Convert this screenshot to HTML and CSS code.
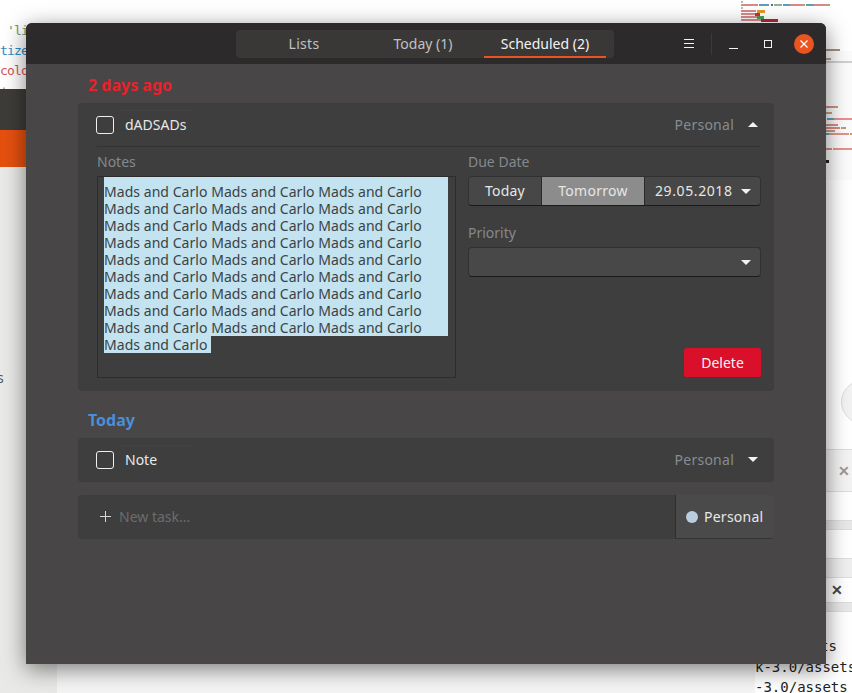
FILE: index.html
```html
<!DOCTYPE html>
<html lang="en">
<head>
    <meta charset="UTF-8">
    <title>Tasks</title>
    <link rel="stylesheet" href="styles.css">
</head>
<body>
    <!-- Other windows behind the app -->
    <div class="desktop">
        <div class="bg-editor">
            <div class="code code-green">'li</div>
            <div class="code code-blue">tize</div>
            <div class="code code-red">colo</div>
            <div class="code code-red">+</div>
        </div>
        <div class="bg-dark"></div>
        <div class="bg-orange"></div>
        <div class="bg-left"></div>
        <div class="bg-s">s</div>

        <svg class="bg-minimap" width="122" height="180" viewBox="730 0 122 180">
            <rect x="826" y="51" width="26" height="129" fill="#fbfbfb"/>
            <rect x="741" y="1" width="2" height="2" fill="#bbb"/>
            <rect x="741" y="4" width="17" height="2" fill="#d88a88"/>
            <rect x="759" y="4" width="10" height="2" fill="#5a9fc0"/>
            <rect x="771" y="4" width="2" height="2" fill="#667"/>
            <rect x="774" y="4" width="8" height="2" fill="#8fb58c"/>
            <rect x="783" y="4" width="7" height="2" fill="#5a9fc0"/>
            <rect x="790" y="4" width="11" height="2" fill="#d88a88"/>
            <rect x="801" y="4" width="4" height="2" fill="#b8a070"/>
            <rect x="806" y="4" width="8" height="2" fill="#5a9fc0"/>
            <rect x="814" y="4" width="11" height="2" fill="#d88a88"/>
            <rect x="825" y="4" width="5" height="2" fill="#b8a070"/>
            <rect x="741" y="7" width="2" height="2" fill="#bbb"/>
            <rect x="741" y="10" width="15" height="2" fill="#d88a88"/>
            <rect x="757" y="10" width="8" height="3" fill="#e09a20"/>
            <rect x="741" y="13" width="14" height="2" fill="#d88a88"/>
            <rect x="755" y="13" width="5" height="3" fill="#c8323a"/>
            <rect x="741" y="16" width="16" height="2" fill="#d88a88"/>
            <rect x="757" y="16" width="7" height="3" fill="#4a9f55"/>
            <rect x="741" y="19" width="20" height="2" fill="#d88a88"/>
            <rect x="761" y="19" width="17" height="3" fill="#b02838"/>
            <rect x="826" y="49" width="14" height="2" fill="#a09080"/>
            <rect x="826" y="58" width="5" height="2" fill="#c89a90"/>
            <rect x="826" y="61" width="26" height="2" fill="#d0d0d0"/>
            <rect x="826" y="106" width="7" height="2" fill="#d88a88"/>
            <rect x="833" y="106" width="5" height="2" fill="#b8a070"/>
            <rect x="826" y="112" width="6" height="2" fill="#c0a080"/>
            <rect x="827" y="118" width="7" height="2" fill="#5a9fc0"/>
            <rect x="834" y="118" width="18" height="2" fill="#e8908c"/>
            <rect x="826" y="124" width="12" height="2" fill="#d88a88"/>
            <rect x="826" y="127" width="14" height="2" fill="#d88a88"/>
            <rect x="841" y="127" width="5" height="2" fill="#b8a070"/>
            <rect x="826" y="130" width="9" height="2" fill="#c0a080"/>
            <rect x="826" y="133" width="3" height="2" fill="#5a9fc0"/>
            <rect x="829" y="133" width="20" height="2" fill="#e8908c"/>
            <rect x="850" y="133" width="2" height="2" fill="#b8a070"/>
            <rect x="826" y="148" width="6" height="2" fill="#d88a88"/>
            <rect x="833" y="148" width="19" height="2" fill="#e8908c"/>
            <rect x="826" y="160" width="3" height="3" fill="#222"/>
        </svg>

        <div class="bg-circle"></div>
        <div class="bg-panel bg-panel-one"><span class="bg-x bg-x-grey">✕</span></div>
        <div class="bg-panel bg-panel-two"></div>
        <div class="bg-panel bg-panel-four"></div>
        <div class="bg-panel bg-panel-three"><span class="bg-x">✕</span></div>
        <div class="bg-panel bg-panel-five"></div>
        <div class="bg-bottom"></div>
        <div class="bg-term">
            <div class="term-first">ts</div>
            <div>k-3.0/assets</div>
            <div>-3.0/assets</div>
        </div>
    </div>

    <div class="window">
        <header class="titlebar">
            <nav class="tabs">
                <div class="tab tab-lists">Lists</div>
                <div class="tab">Today (1)</div>
                <div class="tab tab-active">Scheduled (2)</div>
            </nav>
            <div class="wm">
                <svg class="wm-menu" width="10" height="9" viewBox="0 0 10 9">
                    <path d="M0 .5h10M0 4.5h10M0 8.5h10" stroke="#f2f2f2"/>
                </svg>
                <span class="wm-sep"></span>
                <svg class="wm-min" width="9" height="10" viewBox="0 0 9 10">
                    <path d="M0 9.5h9" stroke="#f2f2f2"/>
                </svg>
                <svg class="wm-max" width="8" height="8" viewBox="0 0 8 8">
                    <rect x=".5" y=".5" width="7" height="7" fill="none" stroke="#f2f2f2"/>
                </svg>
                <div class="wm-close">
                    <svg width="8" height="8" viewBox="0 0 8 8">
                        <path d="M.5.5l7 7M7.5.5l-7 7" stroke="#fff" stroke-width="1.2"/>
                    </svg>
                </div>
            </div>
        </header>

        <main class="content">
            <h2 class="section-title title-late">2 days ago</h2>
            <section class="card">
                <div class="task-row task-row-open">
                    <span class="check"></span>
                    <span class="task-name">dADSADs</span>
                    <span class="task-list">Personal</span>
                    <span class="arrow arrow-up"></span>
                </div>
                <div class="task-details">
                    <div class="notes">
                        <div class="field-label">Notes</div>
                        <div class="notes-box">
                            <div class="note-line note-line-first">Mads and Carlo Mads and Carlo Mads and Carlo</div>
                            <div class="note-line">Mads and Carlo Mads and Carlo Mads and Carlo</div>
                            <div class="note-line">Mads and Carlo Mads and Carlo Mads and Carlo</div>
                            <div class="note-line">Mads and Carlo Mads and Carlo Mads and Carlo</div>
                            <div class="note-line">Mads and Carlo Mads and Carlo Mads and Carlo</div>
                            <div class="note-line">Mads and Carlo Mads and Carlo Mads and Carlo</div>
                            <div class="note-line">Mads and Carlo Mads and Carlo Mads and Carlo</div>
                            <div class="note-line">Mads and Carlo Mads and Carlo Mads and Carlo</div>
                            <div class="note-line">Mads and Carlo Mads and Carlo Mads and Carlo</div>
                            <div class="note-line note-line-last">Mads and Carlo</div>
                        </div>
                    </div>
                    <div class="side">
                        <div class="field-label">Due Date</div>
                        <div class="date-group">
                            <div class="date-btn date-today">Today</div>
                            <div class="date-btn date-tomorrow">Tomorrow</div>
                            <div class="date-btn date-pick"><span class="date-value">29.05.2018</span> <span class="arrow"></span></div>
                        </div>
                        <div class="field-label label-priority">Priority</div>
                        <div class="select"><span class="arrow"></span></div>
                        <div class="delete-wrap">
                            <div class="delete-btn">Delete</div>
                        </div>
                    </div>
                </div>
            </section>

            <h2 class="section-title title-today">Today</h2>
            <section class="card">
                <div class="task-row task-row-closed">
                    <span class="check"></span>
                    <span class="task-name">Note</span>
                    <span class="task-list">Personal</span>
                    <span class="arrow"></span>
                </div>
            </section>

            <div class="new-task">
                <div class="new-input">
                    <svg width="11" height="11" viewBox="0 0 11 11">
                        <path d="M5.5 0v11M0 5.5h11" stroke="#d8d8d8"/>
                    </svg>
                    <span>New task…</span>
                </div>
                <div class="new-list">
                    <span class="dot"></span>
                    <span class="new-list-name">Personal</span>
                </div>
            </div>
        </main>
    </div>
</body>
</html>
```

FILE: styles.css
```css
* {
    margin: 0;
    padding: 0;
    box-sizing: border-box;
}

html, body {
    width: 852px;
    height: 693px;
    overflow: hidden;
}

body {
    background: #fff;
    font-family: 'Noto Sans', sans-serif;
    font-size: 14px;
    position: relative;
}

/* Background windows */
.desktop {
    position: absolute;
    inset: 0;
    overflow: hidden;
}

.bg-editor {
    position: absolute;
    left: 0;
    top: 21px;
    font-family: 'DejaVu Sans Mono', monospace;
    font-size: 13px;
    letter-spacing: -0.8px;
    line-height: 20px;
}

.code-green { color: #5f9c6c; padding-left: 7px; }
.code-blue { color: #2d8cc0; }
.code-red { color: #d9534f; }

.bg-dark {
    position: absolute;
    left: 0;
    top: 89px;
    width: 60px;
    height: 41px;
    background: #3e3c38;
}

.bg-orange {
    position: absolute;
    left: 0;
    top: 130px;
    width: 60px;
    height: 37px;
    background: #e5500f;
}

.bg-left {
    position: absolute;
    left: 0;
    top: 167px;
    width: 57px;
    height: 526px;
    background: #e9e9e7;
}

.bg-s {
    position: absolute;
    left: -3px;
    top: 368px;
    color: #555;
    font-size: 14px;
}

.bg-minimap {
    position: absolute;
    left: 730px;
    top: 0;
}

.bg-circle {
    position: absolute;
    left: 841px;
    top: 380px;
    width: 44px;
    height: 44px;
    border-radius: 50%;
    background: #f2f2f2;
    border: 1px solid #ddd;
}

.bg-panel {
    position: absolute;
    left: 826px;
    width: 26px;
    background: #f3f3f3;
    border-top: 1px solid #ddd;
    border-bottom: 1px solid #ddd;
}

.bg-panel-one { top: 449px; height: 43px; }
.bg-panel-two { top: 520px; height: 10px; background: #e8e8e8; }
.bg-panel-four { top: 558px; height: 20px; background: #efefef; }
.bg-panel-three { top: 577px; height: 26px; background: #fff; }
.bg-panel-five { top: 602px; height: 10px; background: #e8e8e8; }

.bg-x {
    position: absolute;
    left: 5px;
    top: 2px;
    font-size: 14px;
    font-weight: bold;
    color: #444;
}

.bg-x-grey {
    top: 11px;
    left: 12px;
    color: #999;
}

.bg-bottom {
    position: absolute;
    left: 57px;
    top: 664px;
    width: 698px;
    height: 29px;
    background: #f5f5f5;
}

.bg-term {
    position: absolute;
    left: 755px;
    top: 636px;
    width: 97px;
    background: #fff;
    font-family: 'DejaVu Sans Mono', monospace;
    font-size: 14px;
    line-height: 20.5px;
    color: #222;
    white-space: nowrap;
}

.term-first { padding-left: 65px; }

/* App window */
.window {
    position: absolute;
    left: 26px;
    top: 23px;
    width: 800px;
    height: 641px;
    background: #494647;
    border-radius: 6px 6px 0 0;
    box-shadow: 0 5px 22px rgba(0, 0, 0, 0.5);
    overflow: hidden;
}

.titlebar {
    height: 41px;
    background: #2c2a2b;
    position: relative;
    display: flex;
    align-items: center;
    justify-content: flex-end;
}

.tabs {
    position: absolute;
    left: 210px;
    top: 7px;
    width: 378px;
    height: 28px;
    display: flex;
    padding: 0 8px 0 4px;
    background: #3a3837;
    border-radius: 4px;
}

.tab {
    flex: 0 0 122px;
    text-align: center;
    line-height: 28px;
    color: #bfc1c4;
}

.tab-lists {
    padding-left: 6px;
    letter-spacing: 0.3px;
}

.tab-active {
    color: #f2f2f2;
    border-bottom: 2px solid #e95420;
}

.wm {
    display: flex;
    align-items: center;
    height: 100%;
    padding-right: 12px;
}

.wm-sep {
    width: 1px;
    height: 22px;
    margin: 0 17px 0 17px;
    background: #3b3939;
}

.wm-min { margin-right: 26px; }
.wm-max { margin-right: 22px; }

.wm-close {
    width: 20px;
    height: 20px;
    border-radius: 50%;
    background: #e95420;
    display: flex;
    align-items: center;
    justify-content: center;
}

.content {
    padding: 0 52px;
}

.section-title {
    font-size: 16px;
    font-weight: bold;
    padding-left: 10px;
    line-height: 22px;
}

.title-late {
    color: #ec2028;
    margin-top: 10px;
    margin-bottom: 7px;
}

.title-today {
    color: #4a8fd9;
    margin-top: 18px;
    margin-bottom: 7px;
}

.card {
    background: #3e3e3e;
    border-radius: 4px;
}

.task-row {
    height: 44px;
    margin: 0 13px 0 19px;
    display: flex;
    align-items: center;
}

.task-row-open {
    border-bottom: 1px solid #333;
}

.task-row-closed {
    padding-bottom: 1px;
}

.check {
    width: 18px;
    height: 18px;
    margin-left: -1px;
    border: 1px solid #eee;
    border-radius: 3px;
}

.task-name {
    margin-left: 11px;
    color: #e8e8e8;
    position: relative;
}

/* faint edge of the entry around the name */
.task-name::before {
    content: '';
    position: absolute;
    left: -5px;
    top: -5px;
    width: 70px;
    height: 1px;
    background: #434343;
}

.task-list {
    margin-left: auto;
    margin-right: 14px;
    color: #848d94;
    letter-spacing: 0.25px;
}

.arrow {
    display: inline-block;
    width: 0;
    height: 0;
    border-left: 5px solid transparent;
    border-right: 5px solid transparent;
    border-top: 5px solid #f2f2f2;
}

.task-row .arrow {
    margin-right: 3px;
}

.arrow-up {
    border-top: 0;
    border-bottom: 5px solid #f2f2f2;
}

.task-details {
    display: flex;
    gap: 12px;
    padding: 0 13px 13px 19px;
}

.notes {
    width: 359px;
}

.field-label {
    color: #85898c;
    line-height: 29px;
}

.notes-box {
    height: 202px;
    border: 1px solid #2c2c2c;
    padding: 0 7px 0 6px;
}

.note-line {
    height: 17px;
    line-height: 17px;
    white-space: nowrap;
    letter-spacing: 0.045px;
    background: #c2e3ef;
    color: #3c4245;
}

.note-line-first {
    height: 23px;
    padding-top: 6px;
}

.note-line-last {
    width: 107px;
}

.side {
    flex: 1;
    display: flex;
    flex-direction: column;
}

.date-group {
    display: flex;
    height: 30px;
    background: #474747;
    border: 1px solid #313131;
    border-bottom-color: #1a1a1a;
    border-radius: 4px;
    overflow: hidden;
}

.date-btn {
    text-align: center;
    line-height: 28px;
    color: #e6e6e6;
    border-right: 1px solid #2a2a2a;
}

.date-today {
    width: 73px;
    letter-spacing: 0.2px;
}

.date-tomorrow {
    width: 103px;
    background: #8c8c8c;
    letter-spacing: 0.3px;
}

.date-pick {
    flex: 1;
    border-right: 0;
    display: flex;
    align-items: center;
    justify-content: space-between;
    padding: 0 9px 0 10px;
}

.date-value {
    letter-spacing: 0.6px;
}

.label-priority {
    margin-top: 12px;
}

.select {
    height: 30px;
    background: #484848;
    border: 1px solid #313131;
    border-bottom-color: #1a1a1a;
    border-radius: 4px;
    display: flex;
    align-items: center;
    justify-content: flex-end;
    padding-right: 9px;
}

.delete-wrap {
    margin-top: auto;
    display: flex;
    justify-content: flex-end;
}

.delete-btn {
    width: 77px;
    height: 30px;
    line-height: 29px;
    text-align: center;
    background: #da0f2a;
    border-bottom: 1px solid #a50c20;
    border-radius: 3px;
    color: #f5f5f5;
}

.new-task {
    display: flex;
    height: 44px;
    margin-top: 13px;
    background: #3e3e3e;
    border-radius: 4px;
    overflow: hidden;
}

.new-input {
    flex: 1;
    display: flex;
    align-items: center;
    gap: 8px;
    padding: 0 0 1px 22px;
    color: #6c6c6c;
}

.new-list {
    width: 99px;
    display: flex;
    align-items: center;
    gap: 6px;
    padding: 0 0 0 10px;
    background: #4a4a4a;
    border-left: 1px solid #2e2e2e;
    border-bottom: 1px solid #343434;
    color: #e8e8e8;
}

.new-list-name {
    letter-spacing: 0.25px;
}

.dot {
    width: 12px;
    height: 12px;
    border-radius: 50%;
    background: #b8cde0;
}
```
